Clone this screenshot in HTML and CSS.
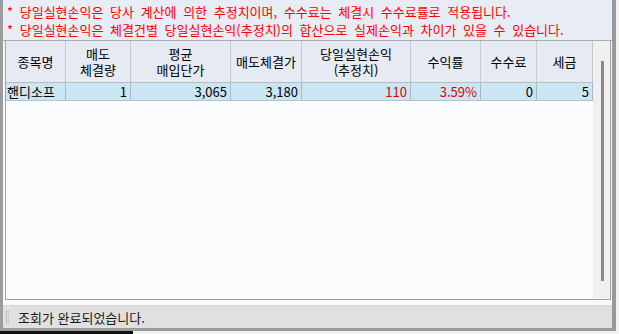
FILE: index.html
```html
<!DOCTYPE html>
<html lang="ko">
<head>
    <meta charset="UTF-8">
    <title>당일실현손익</title>
    <link rel="stylesheet" href="styles.css">
</head>
<body>
    <div class="window">
        <div class="notes">
            <p>* 당일실현손익은 당사 계산에 의한 추정치이며, 수수료는 체결시 수수료률로 적용됩니다.</p>
            <p>* 당일실현손익은 체결건별 당일실현손익(추정치)의 합산으로 실제손익과 차이가 있을 수 있습니다.</p>
        </div>
        <div class="panel">
            <div class="grid">
                <div class="table">
                    <div class="row head">
                        <div class="cell">종목명</div>
                        <div class="cell">매도<br>체결량</div>
                        <div class="cell">평균<br>매입단가</div>
                        <div class="cell">매도체결가</div>
                        <div class="cell">당일실현손익<br>(추정치)</div>
                        <div class="cell">수익률</div>
                        <div class="cell">수수료</div>
                        <div class="cell">세금</div>
                    </div>
                    <div class="row data">
                        <div class="cell name">핸디소프</div>
                        <div class="cell">1</div>
                        <div class="cell">3,065</div>
                        <div class="cell">3,180</div>
                        <div class="cell red">110</div>
                        <div class="cell red">3.59%</div>
                        <div class="cell">0</div>
                        <div class="cell">5</div>
                    </div>
                </div>
                <div class="vscroll"><div class="thumb"></div></div>
            </div>
        </div>
        <div class="status"><span class="grip"></span>조회가 완료되었습니다.</div>
    </div>
    <div class="under"><span class="dark"></span></div>
</body>
</html>
```

FILE: styles.css
```css
body {
    margin: 0;
    width: 619px;
    height: 334px;
    background: #f2f2f2;
    font-family: "Noto Sans CJK KR", "Noto Sans", sans-serif;
    font-size: 13px;
    color: #000;
    overflow: hidden;
}
.window {
    box-sizing: border-box;
    width: 616px;
    height: 331px;
    border-left: 3px solid #9c9c9c;
    border-right: 4px solid #989898;
    border-bottom: 3px solid #9c9c9c;
    display: flex;
    flex-direction: column;
}
.notes {
    box-sizing: border-box;
    height: 41px;
    padding: 3px 0 0 4px;
    background: #e8ecf4;
    border-bottom: 1px solid #a8acb4;
}
.notes p {
    margin: 0;
    line-height: 18px;
    color: #f00;
    word-spacing: 3px;
    white-space: nowrap;
}
.panel {
    background: #f8f8f8;
    padding: 0 1px 5px 2px;
}
.grid {
    display: flex;
    height: 258px;
    border: 1px solid #a0a0a0;
    border-top: none;
    background: #fbfcfe;
}
.table {
    width: 587px;
}
.row {
    display: grid;
    grid-template-columns: 60px 65px 100px 71px 109px 70px 56px 56px;
}
.cell {
    box-sizing: border-box;
    border-right: 1px solid #c4c8d0;
    border-bottom: 1px solid #b8bcc4;
    white-space: nowrap;
}
.head .cell {
    height: 42px;
    background: #e6eaf2;
    display: flex;
    align-items: center;
    justify-content: center;
    text-align: center;
    line-height: 16px;
}
.data .cell {
    height: 18px;
    line-height: 17px;
    background: #cbe6f2;
    text-align: right;
    padding-right: 3px;
    border-right-color: #a9b9c3;
    border-bottom-color: #b4c4cc;
}
.data .name {
    text-align: left;
    padding-left: 1px;
}
.data .red {
    color: #e00000;
}
.vscroll {
    width: 17px;
    background: #f0f0f0;
    padding-top: 20px;
}
.thumb {
    width: 3px;
    height: 220px;
    margin-left: 8px;
    background: #8a8a8a;
}
.status {
    flex: 1;
    display: flex;
    align-items: center;
    background: #e0e0e0;
    border-top: 1px solid #d6d6d6;
    color: #1a1a1a;
}
.grip {
    width: 1px;
    height: 12px;
    margin: 0 9px 0 3px;
    border-left: 1px dotted #9a9a9a;
    border-right: 1px dotted #b8b8b8;
}
.under {
    display: flex;
    height: 3px;
}
.dark {
    width: 133px;
    background: #111;
}
```
